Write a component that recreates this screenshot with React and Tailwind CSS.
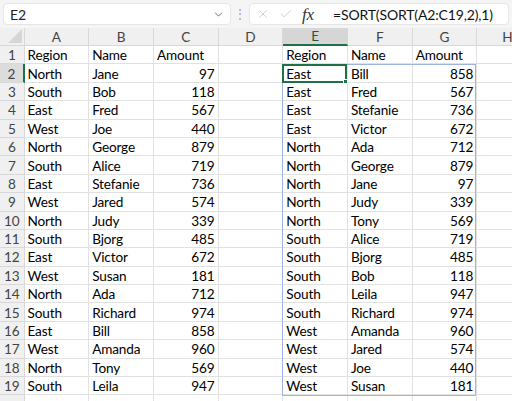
import { ChevronDown, X, Check } from "lucide-react";

const COLS = ["A", "B", "C", "D", "E", "F", "G", "H"];

const source = [
    ["North", "Jane", 97],
    ["South", "Bob", 118],
    ["East", "Fred", 567],
    ["West", "Joe", 440],
    ["North", "George", 879],
    ["South", "Alice", 719],
    ["East", "Stefanie", 736],
    ["West", "Jared", 574],
    ["North", "Judy", 339],
    ["South", "Bjorg", 485],
    ["East", "Victor", 672],
    ["West", "Susan", 181],
    ["North", "Ada", 712],
    ["South", "Richard", 974],
    ["East", "Bill", 858],
    ["West", "Amanda", 960],
    ["North", "Tony", 569],
    ["South", "Leila", 947],
];

// =SORT(SORT(A2:C19,2),1) -> by name, then by region
const sorted = [...source]
    .sort((a, b) => a[1].localeCompare(b[1]))
    .sort((a, b) => a[0].localeCompare(b[0]));

const buildRows = () => {
    const rows = [["Region", "Name", "Amount", "", "Region", "Name", "Amount", ""]];
    source.forEach((r, i) => {
        const s = sorted[i];
        rows.push([r[0], r[1], r[2], "", s[0], s[1], s[2], ""]);
    });
    rows.push(["", "", "", "", "", "", "", ""]);
    return rows;
};

const Cell = ({ value }) => {
    const isNum = typeof value === "number";
    return (
        <div
            className={`w-[64.7px] shrink-0 h-full border-r border-b border-[#e1e1e1] flex items-center pt-[1px] px-[3px] leading-[16px] whitespace-nowrap overflow-hidden ${isNum ? "justify-end" : "justify-start"}`}
        >
            {value}
        </div>
    );
};

const FormulaBar = () => (
    <div className="h-[28px] shrink-0 bg-[#f5f5f5] flex items-center px-[3px] gap-[6px]">
        <div className="w-[228px] h-[22px] bg-white rounded-[4px] border border-[#e6e6e6] flex items-center justify-between pl-[6px] pr-[5px] text-[14px] text-[#222]">
            <span>E2</span>
            <ChevronDown size={13} strokeWidth={1.5} className="text-[#555]" />
        </div>
        <div className="w-[6px] flex justify-center text-[#a0a0a0] text-[12px] leading-none">⋮</div>
        <div className="flex-1 h-[22px] bg-white rounded-[4px] border border-[#e6e6e6] flex items-center">
            <div className="flex items-center gap-[9px] pl-[6px] pr-[8px]">
                <X size={14} strokeWidth={1} className="text-[#b0b0b0]" />
                <Check size={14} strokeWidth={1} className="text-[#b0b0b0]" />
                <span className="font-['Liberation_Serif',serif] italic text-[17px] text-[#333] leading-none">fx</span>
            </div>
            <div className="h-full pl-[11px] text-[14px] text-[#111] flex items-center">
                =SORT(SORT(A2:C19,2),1)
            </div>
        </div>
    </div>
);

const Corner = () => (
    <div className="w-[24.5px] shrink-0 h-full border-r border-b border-[#d8d8d8] bg-[#f0f0f0] relative">
        <svg width="14" height="14" viewBox="0 0 14 14" className="absolute right-[2px] bottom-[2px]">
            <polygon points="14,0 14,14 0,14" fill="#d6d6d6" />
        </svg>
    </div>
);

const headerClass = (c) => {
    if (c === "E") return "justify-center bg-[#d6d6d6] border-b-2 border-b-[#1e7145] text-[#1e5a36] border-r border-r-[#d8d8d8]";
    if (c === "H") return "justify-start pl-[25px] border-r border-b border-[#d8d8d8] text-[#444]";
    return "justify-center border-r border-b border-[#d8d8d8] text-[#444]";
};

const App = () => {
    const rows = buildRows();

    return (
        <div className="w-[512px] h-[401px] overflow-hidden bg-white flex flex-col font-['Lato',sans-serif] text-[13.6px] tracking-[-0.15px] text-black">
            <FormulaBar />
            <div className="relative flex-1 overflow-hidden">
                <div className="h-[18px] flex bg-[#f0f0f0] leading-[16px]">
                    <Corner />
                    {COLS.map((c) => (
                        <div
                            key={c}
                            className={`w-[64.7px] shrink-0 h-full flex items-center text-[13.6px] ${headerClass(c)}`}
                        >
                            {c}
                        </div>
                    ))}
                </div>
                {rows.map((row, i) => (
                    <div key={i} className="h-[18.4px] flex">
                        <div
                            className={`w-[24.5px] shrink-0 h-full flex items-center justify-center text-[13.6px] leading-[16px] pt-[1px] border-b border-[#d8d8d8] ${i === 1 ? "bg-[#dcdcdc] border-r-2 border-r-[#1e7145] text-[#444]" : "bg-[#f0f0f0] border-r border-r-[#d8d8d8] text-[#444]"}`}
                        >
                            {i < rows.length - 1 ? i + 1 : ""}
                        </div>
                        {row.map((v, j) => (
                            <Cell key={j} value={v} />
                        ))}
                    </div>
                ))}
                {/* spill range E2:G19 */}
                <div className="absolute left-[282.3px] top-[36.4px] w-[194.1px] h-[331.2px] border border-[#9fb4e0] pointer-events-none" />
                {/* active cell E2 */}
                <div className="absolute left-[281.8px] top-[35.9px] w-[65.5px] h-[19.4px] border-2 border-[#1e7145] pointer-events-none">
                    <div className="absolute -right-[3px] -bottom-[3px] w-[5px] h-[5px] bg-[#1e7145] border border-white" />
                </div>
            </div>
        </div>
    );
};

export default App;
